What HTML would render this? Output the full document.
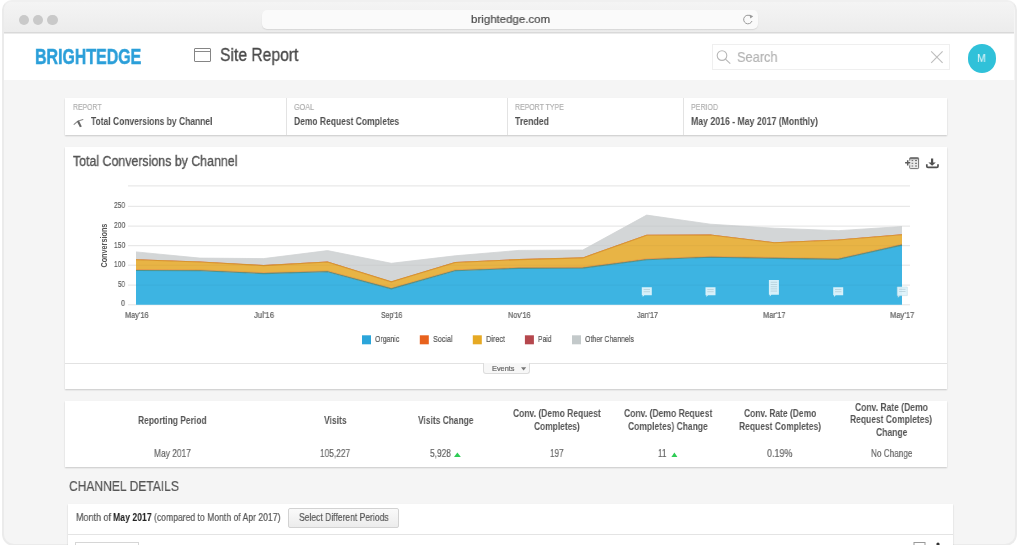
<!DOCTYPE html>
<html>
<head>
<meta charset="utf-8">
<title>BrightEdge - Site Report</title>
<style>
html,body{margin:0;padding:0;}
body{width:1024px;height:545px;overflow:hidden;position:relative;background:#fff;font-family:"Liberation Sans",sans-serif;}
.a{position:absolute;box-sizing:border-box;}
.t{position:absolute;white-space:nowrap;transform-origin:0 0;will-change:transform;font-family:"Liberation Sans",sans-serif;}
.win{left:2px;top:0;width:1014.5px;height:546px;border:2px solid #ebebeb;border-top-color:#f0f0f0;border-radius:10px 10px 12px 12px;background:#f5f5f5;overflow:hidden;}
.titlebar{left:0;top:0;width:1010px;height:30.5px;background:linear-gradient(#f4f4f4,#ececec);border-bottom:1px solid #d9d9d9;}
.titleshadow{left:0;top:30.5px;width:1010px;height:2px;background:linear-gradient(#e6e6e6,#fbfbfb);}
.dot{width:10.6px;height:10.6px;border-radius:50%;background:#c9c9c9;top:12.7px;}
.url{left:258px;top:7.5px;width:496px;height:19px;border-radius:5px;background:#fafafa;box-shadow:0 1px 1px #d8d8d8;}
.header{left:0;top:32px;width:1010px;height:46px;background:#fff;}
.card{background:#fff;box-shadow:0 1px 1.5px rgba(0,0,0,0.18);}
.chart{position:absolute;left:0;top:0;}
</style>
</head>
<body>
<div class="a win">
  <div class="a titlebar"></div>
  <div class="a titleshadow"></div>
  <div class="a dot" style="left:14.5px"></div>
  <div class="a dot" style="left:28.9px"></div>
  <div class="a dot" style="left:43.3px"></div>
  <div class="a url"></div>
  <div class="a header"></div>
</div>

<!-- reload icon -->
<svg class="chart" width="1024" height="545" style="pointer-events:none">
  <path d="M751.3,16.8 A4.3,4.3 0 1 0 752,21" fill="none" stroke="#9a9a9a" stroke-width="1"/>
  <path d="M749.5,14.4 L753.2,16.2 L750.3,18.6 z" fill="#9a9a9a"/>
</svg>

<!-- header: site report icon, search, avatar -->
<div class="a" style="left:193.8px;top:48.2px;width:17px;height:14.2px;border:1.2px solid #858585;border-radius:1px;"></div>
<div class="a" style="left:195px;top:51.2px;width:14.6px;height:1px;background:#8a8a8a;"></div>
<div class="a" style="left:711.5px;top:44.3px;width:238.5px;height:26px;border:1px solid #efefef;background:#fff;"></div>
<svg class="chart" width="1024" height="545">
  <circle cx="722" cy="55.6" r="4.8" fill="none" stroke="#b8b8b8" stroke-width="1.1"/>
  <line x1="725.4" y1="59.1" x2="730.3" y2="63.6" stroke="#b8b8b8" stroke-width="1.2"/>
  <line x1="931.2" y1="51.3" x2="942.6" y2="62.8" stroke="#bdbdbd" stroke-width="1.1"/>
  <line x1="942.6" y1="51.3" x2="931.2" y2="62.8" stroke="#bdbdbd" stroke-width="1.1"/>
</svg>
<div class="a" style="left:967.6px;top:43.9px;width:28.8px;height:28.8px;border-radius:50%;background:#30c1d9;"></div>
<span class="t" style="left:976.6px;top:52.8px;font-size:11.5px;line-height:11.5px;color:#e6f7fa;transform:scaleX(0.92)">M</span>

<!-- report card -->
<div class="a card" style="left:65px;top:98.3px;width:882px;height:36.3px;"></div>
<div class="a" style="left:286px;top:98.3px;width:1px;height:36.3px;background:#e3e3e3;"></div>
<div class="a" style="left:507px;top:98.3px;width:1px;height:36.3px;background:#e3e3e3;"></div>
<div class="a" style="left:683px;top:98.3px;width:1px;height:36.3px;background:#e3e3e3;"></div>
<svg class="chart" width="1024" height="545">
  <path d="M74.1,124.3 L77.7,121.3 L82.9,119.6" fill="none" stroke="#8a8a8a" stroke-width="1.1" stroke-linecap="round"/>
  <path d="M76.9,121.6 L78.9,120.6 L81.8,126.6 L79.9,127.2 z" fill="#666"/>
</svg>

<!-- chart card -->
<div class="a card" style="left:65px;top:146.5px;width:882px;height:242.5px;"></div>
<div class="a" style="left:65px;top:362.7px;width:882px;height:1px;background:#e2e2e2;"></div>
<div class="a" style="left:483.3px;top:363px;width:46.7px;height:11.3px;border:1px solid #dcdcdc;border-top:none;border-radius:0 0 3px 3px;background:#f7f7f7;"></div>
<svg class="chart" width="1024" height="545">
  <path d="M521,367.2 L526.2,367.2 L523.6,370.4 z" fill="#777"/>
  <!-- add-table icon -->
  <rect x="909.7" y="157.7" width="8.9" height="10.9" rx="0.8" fill="#e9e9e9" stroke="#707070" stroke-width="1"/>
  <rect x="909.7" y="157.7" width="8.9" height="1.6" fill="#707070"/>
  <path d="M911.6,160.6 h1.6 M915,160.6 h2 M911.6,163.3 h1.6 M915,163.3 h2 M911.6,166 h1.6 M915,166 h2" stroke="#6a6a6a" stroke-width="1"/>
  <path d="M904.6,162.8 h6.2 M907.7,159.7 v6.2" stroke="#fff" stroke-width="3.2"/>
  <path d="M905.1,162.8 h5.2 M907.7,160.2 v5.2" stroke="#5c5c5c" stroke-width="1.5"/>
  <!-- download icon -->
  <path d="M931,158.4 h2.2 v4.2 h2.6 l-3.7,3.2 l-3.7,-3.2 h2.6 z" fill="#505050"/>
  <path d="M926.8,164.3 v1.9 q0,1.2 1.2,1.2 h8.8 q1.2,0 1.2,-1.2 v-1.9" fill="none" stroke="#505050" stroke-width="1.7"/>
  <!-- legend squares -->
  <rect x="362" y="335.3" width="9" height="9" fill="#2ba5da"/>
  <rect x="419.8" y="335.3" width="9" height="9" fill="#e8621d"/>
  <rect x="472.8" y="335.3" width="9" height="9" fill="#e6a923"/>
  <rect x="524.9" y="335.3" width="9" height="9" fill="#b5474d"/>
  <rect x="572" y="335.3" width="9" height="9" fill="#c3c9ca"/>
</svg>
<svg class="chart" width="1024" height="545" viewBox="0 0 1024 545">
<defs><clipPath id="areaclip"><polygon points="136.00,251.90 199.83,258.10 263.67,258.60 327.50,250.60 391.33,263.30 455.17,255.80 519.00,250.40 582.83,250.00 646.67,215.10 710.50,224.20 774.33,228.20 838.17,230.70 902.00,226.50 902.00,304.70 838.17,304.70 774.33,304.70 710.50,304.70 646.67,304.70 582.83,304.70 519.00,304.70 455.17,304.70 391.33,304.70 327.50,304.70 263.67,304.70 199.83,304.70 136.00,304.70"/></clipPath></defs>
<line x1="128" y1="185.9" x2="910" y2="185.9" stroke="#e3e3e3" stroke-width="1"/><line x1="128" y1="206.3" x2="910" y2="206.3" stroke="#e3e3e3" stroke-width="1"/><line x1="128" y1="226.1" x2="910" y2="226.1" stroke="#e3e3e3" stroke-width="1"/><line x1="128" y1="245.7" x2="910" y2="245.7" stroke="#e3e3e3" stroke-width="1"/><line x1="128" y1="265.2" x2="910" y2="265.2" stroke="#e3e3e3" stroke-width="1"/><line x1="128" y1="285.1" x2="910" y2="285.1" stroke="#e3e3e3" stroke-width="1"/><line x1="128" y1="304.8" x2="910" y2="304.8" stroke="#e3e3e3" stroke-width="1"/>
<polygon points="136.00,251.90 199.83,258.10 263.67,258.60 327.50,250.60 391.33,263.30 455.17,255.80 519.00,250.40 582.83,250.00 646.67,215.10 710.50,224.20 774.33,228.20 838.17,230.70 902.00,226.50 902.00,234.25 838.17,239.50 774.33,242.30 710.50,234.50 646.67,234.70 582.83,257.40 519.00,259.10 455.17,262.00 391.33,281.40 327.50,261.50 263.67,265.10 199.83,261.50 136.00,259.20" fill="#d3d6d7"/>
<polygon points="136.00,259.20 199.83,261.50 263.67,265.10 327.50,261.50 391.33,281.40 455.17,262.00 519.00,259.10 582.83,257.40 646.67,234.70 710.50,234.50 774.33,242.30 838.17,239.50 902.00,234.25 902.00,234.75 838.17,240.00 774.33,242.80 710.50,235.00 646.67,235.20 582.83,257.90 519.00,259.60 455.17,262.50 391.33,281.90 327.50,262.00 263.67,265.60 199.83,262.00 136.00,259.70" fill="#c0504d"/>
<polygon points="136.00,259.70 199.83,262.00 263.67,265.60 327.50,262.00 391.33,281.90 455.17,262.50 519.00,259.60 582.83,257.90 646.67,235.20 710.50,235.00 774.33,242.80 838.17,240.00 902.00,234.75 902.00,244.25 838.17,258.50 774.33,257.50 710.50,256.40 646.67,258.80 582.83,267.20 519.00,267.50 455.17,269.90 391.33,288.00 327.50,270.90 263.67,272.75 199.83,269.90 136.00,269.60" fill="#e8b445"/>
<polygon points="136.00,269.60 199.83,269.90 263.67,272.75 327.50,270.90 391.33,288.00 455.17,269.90 519.00,267.50 582.83,267.20 646.67,258.80 710.50,256.40 774.33,257.50 838.17,258.50 902.00,244.25 902.00,245.25 838.17,259.50 774.33,258.50 710.50,257.40 646.67,259.80 582.83,268.20 519.00,268.50 455.17,270.90 391.33,289.00 327.50,271.90 263.67,273.75 199.83,270.90 136.00,270.60" fill="#e0782c"/>
<polygon points="136.00,270.60 199.83,270.90 263.67,273.75 327.50,271.90 391.33,289.00 455.17,270.90 519.00,268.50 582.83,268.20 646.67,259.80 710.50,257.40 774.33,258.50 838.17,259.50 902.00,245.25 902.00,304.70 838.17,304.70 774.33,304.70 710.50,304.70 646.67,304.70 582.83,304.70 519.00,304.70 455.17,304.70 391.33,304.70 327.50,304.70 263.67,304.70 199.83,304.70 136.00,304.70" fill="#3db4e2"/>
<polyline points="136.00,251.90 199.83,258.10 263.67,258.60 327.50,250.60 391.33,263.30 455.17,255.80 519.00,250.40 582.83,250.00 646.67,215.10 710.50,224.20 774.33,228.20 838.17,230.70 902.00,226.50" fill="none" stroke="#d0d3d4" stroke-width="0.8"/>
<polyline points="136.00,259.70 199.83,262.00 263.67,265.60 327.50,262.00 391.33,281.90 455.17,262.50 519.00,259.60 582.83,257.90 646.67,235.20 710.50,235.00 774.33,242.80 838.17,240.00 902.00,234.75" fill="none" stroke="#d8952e" stroke-width="1.1"/>
<polyline points="136.00,269.60 199.83,269.90 263.67,272.75 327.50,270.90 391.33,288.00 455.17,269.90 519.00,267.50 582.83,267.20 646.67,258.80 710.50,256.40 774.33,257.50 838.17,258.50 902.00,244.25" fill="none" stroke="#df8a30" stroke-width="1.0" stroke-opacity="0.55"/>
<polyline points="136.00,270.50 199.83,270.80 263.67,273.65 327.50,271.80 391.33,288.90 455.17,270.80 519.00,268.40 582.83,268.10 646.67,259.70 710.50,257.30 774.33,258.40 838.17,259.40 902.00,245.15" fill="none" stroke="#4f948c" stroke-width="1.1"/>
<g clip-path="url(#areaclip)"><line x1="136" y1="226.1" x2="902" y2="226.1" stroke="#000" stroke-opacity="0.035" stroke-width="1"/><line x1="136" y1="245.7" x2="902" y2="245.7" stroke="#000" stroke-opacity="0.035" stroke-width="1"/><line x1="136" y1="265.2" x2="902" y2="265.2" stroke="#000" stroke-opacity="0.035" stroke-width="1"/><line x1="136" y1="285.1" x2="902" y2="285.1" stroke="#000" stroke-opacity="0.035" stroke-width="1"/></g>
<path d="M641.8,287.2h10v8.0h-7.5l-1.6,1.7v-1.7h-0.9z" fill="#dff3fb" fill-opacity="0.95"/><line x1="643.6" y1="289.5" x2="650.0" y2="289.5" stroke="#aac4cf" stroke-width="0.6"/><line x1="643.6" y1="291.7" x2="650.0" y2="291.7" stroke="#aac4cf" stroke-width="0.6"/><path d="M705.5,287.2h10v8h-7.5l-1.6,1.7v-1.7h-0.9z" fill="#dff3fb" fill-opacity="0.95"/><line x1="707.3" y1="289.5" x2="713.7" y2="289.5" stroke="#aac4cf" stroke-width="0.6"/><line x1="707.3" y1="291.7" x2="713.7" y2="291.7" stroke="#aac4cf" stroke-width="0.6"/><path d="M768.9,280.0h10v14.8h-7.5l-1.6,1.7v-1.7h-0.9z" fill="#dff3fb" fill-opacity="0.95"/><line x1="770.7" y1="282.3" x2="777.1" y2="282.3" stroke="#aac4cf" stroke-width="0.6"/><line x1="770.7" y1="284.5" x2="777.1" y2="284.5" stroke="#aac4cf" stroke-width="0.6"/><line x1="770.7" y1="286.7" x2="777.1" y2="286.7" stroke="#aac4cf" stroke-width="0.6"/><line x1="770.7" y1="288.9" x2="777.1" y2="288.9" stroke="#aac4cf" stroke-width="0.6"/><line x1="770.7" y1="291.1" x2="777.1" y2="291.1" stroke="#aac4cf" stroke-width="0.6"/><path d="M833.2,287.2h10v8h-7.5l-1.6,1.7v-1.7h-0.9z" fill="#dff3fb" fill-opacity="0.95"/><line x1="835.0" y1="289.5" x2="841.4" y2="289.5" stroke="#aac4cf" stroke-width="0.6"/><line x1="835.0" y1="291.7" x2="841.4" y2="291.7" stroke="#aac4cf" stroke-width="0.6"/><path d="M897.3,287.0h10v8.6h-7.5l-1.6,1.7v-1.7h-0.9z" fill="#dff3fb" fill-opacity="0.95" stroke="#c5dde6" stroke-width="0.6"/><line x1="899.1" y1="289.3" x2="905.5" y2="289.3" stroke="#aac4cf" stroke-width="0.6"/><line x1="899.1" y1="291.5" x2="905.5" y2="291.5" stroke="#aac4cf" stroke-width="0.6"/>
<text x="0" y="0" transform="translate(106.6,245.6) rotate(-90)" text-anchor="middle" font-family="Liberation Sans" font-weight="bold" font-size="8.2" fill="#555" textLength="44" lengthAdjust="spacingAndGlyphs">Conversions</text>
</svg>

<!-- summary table -->
<div class="a card" style="left:65px;top:400.6px;width:882px;height:66.4px;"></div>

<!-- channel details -->
<div class="a card" style="left:68px;top:504.2px;width:885.4px;height:60px;"></div>
<div class="a" style="left:68px;top:534px;width:885.4px;height:1px;background:#e4e4e4;"></div>
<div class="a" style="left:288.1px;top:508.1px;width:110.9px;height:19.7px;border:1px solid #d2d2d2;border-radius:2px;background:linear-gradient(#fafafa,#ececec);"></div>
<div class="a" style="left:75.4px;top:541.7px;width:64.1px;height:12px;border:1px solid #d6d6d6;background:#fff;"></div>
<svg class="chart" width="1024" height="545">
  <path d="M451.8,457 L455.2,452.6 L458.6,457 z" transform="translate(2.2,0)" fill="#2ecc55"/>
  <path d="M671.4,457 L674.4,452.6 L677.4,457 z" fill="#2ecc55"/>
  <rect x="914" y="542.5" width="11" height="4" fill="none" stroke="#999" stroke-width="1"/>
  <circle cx="938" cy="544" r="1.6" fill="#333"/>
</svg>

<span class="t" style="left:470.70px;top:13.03px;font-size:11.63px;line-height:11.63px;color:#4a4a4a;font-weight:normal;transform:scaleX(0.9869);-webkit-text-stroke:0.2px #4a4a4a;">brightedge.com</span>
<span class="t" style="left:34.50px;top:45.76px;font-size:21.22px;line-height:21.22px;color:#2b9fd9;font-weight:bold;transform:scaleX(0.7513);-webkit-text-stroke:0.5px #2b9fd9;">BRIGHTEDGE</span>
<span class="t" style="left:219.60px;top:46.42px;font-size:18.75px;line-height:18.75px;color:#4a4a4a;font-weight:normal;transform:scaleX(0.8359);-webkit-text-stroke:0.35px #4a4a4a;">Site Report</span>
<span class="t" style="left:737.00px;top:48.58px;font-size:15.55px;line-height:15.55px;color:#b4b4b4;font-weight:normal;transform:scaleX(0.8240);-webkit-text-stroke:0.2px #b4b4b4;">Search</span>
<span class="t" style="left:72.75px;top:103.09px;font-size:9.30px;line-height:9.30px;color:#b0b0b0;font-weight:normal;transform:scaleX(0.7384);-webkit-text-stroke:0.2px #b0b0b0;">REPORT</span>
<span class="t" style="left:90.50px;top:116.80px;font-size:10.32px;line-height:10.32px;color:#505050;font-weight:bold;transform:scaleX(0.8223);">Total Conversions by Channel</span>
<span class="t" style="left:294.00px;top:103.09px;font-size:9.30px;line-height:9.30px;color:#b0b0b0;font-weight:normal;transform:scaleX(0.7737);-webkit-text-stroke:0.2px #b0b0b0;">GOAL</span>
<span class="t" style="left:294.00px;top:116.78px;font-size:10.32px;line-height:10.32px;color:#505050;font-weight:bold;transform:scaleX(0.8230);">Demo Request Completes</span>
<span class="t" style="left:514.50px;top:103.09px;font-size:9.30px;line-height:9.30px;color:#b0b0b0;font-weight:normal;transform:scaleX(0.7483);-webkit-text-stroke:0.2px #b0b0b0;">REPORT TYPE</span>
<span class="t" style="left:514.50px;top:116.83px;font-size:10.32px;line-height:10.32px;color:#505050;font-weight:bold;transform:scaleX(0.8470);">Trended</span>
<span class="t" style="left:691.00px;top:103.09px;font-size:9.30px;line-height:9.30px;color:#b0b0b0;font-weight:normal;transform:scaleX(0.7570);-webkit-text-stroke:0.2px #b0b0b0;">PERIOD</span>
<span class="t" style="left:691.00px;top:116.71px;font-size:10.32px;line-height:10.32px;color:#505050;font-weight:bold;transform:scaleX(0.8452);">May 2016 - May 2017 (Monthly)</span>
<span class="t" style="left:73.00px;top:154.30px;font-size:14.68px;line-height:14.68px;color:#555;font-weight:normal;transform:scaleX(0.8435);-webkit-text-stroke:0.35px #555;">Total Conversions by Channel</span>
<span class="t" style="left:114.00px;top:200.59px;font-size:8.72px;line-height:8.72px;color:#606060;font-weight:normal;transform:scaleX(0.7562);-webkit-text-stroke:0.2px #606060;">250</span>
<span class="t" style="left:113.75px;top:220.59px;font-size:8.72px;line-height:8.72px;color:#606060;font-weight:normal;transform:scaleX(0.7734);-webkit-text-stroke:0.2px #606060;">200</span>
<span class="t" style="left:113.75px;top:241.09px;font-size:8.72px;line-height:8.72px;color:#606060;font-weight:normal;transform:scaleX(0.7734);-webkit-text-stroke:0.2px #606060;">150</span>
<span class="t" style="left:113.75px;top:260.09px;font-size:8.72px;line-height:8.72px;color:#606060;font-weight:normal;transform:scaleX(0.7734);-webkit-text-stroke:0.2px #606060;">100</span>
<span class="t" style="left:118.00px;top:279.59px;font-size:8.72px;line-height:8.72px;color:#606060;font-weight:normal;transform:scaleX(0.7218);-webkit-text-stroke:0.2px #606060;">50</span>
<span class="t" style="left:121.00px;top:299.09px;font-size:8.72px;line-height:8.72px;color:#606060;font-weight:normal;transform:scaleX(0.8249);-webkit-text-stroke:0.2px #606060;">0</span>
<span class="t" style="left:124.50px;top:310.52px;font-size:8.72px;line-height:8.72px;color:#606060;font-weight:normal;transform:scaleX(0.8442);-webkit-text-stroke:0.2px #606060;">May'16</span>
<span class="t" style="left:253.75px;top:310.59px;font-size:8.72px;line-height:8.72px;color:#606060;font-weight:normal;transform:scaleX(0.8882);-webkit-text-stroke:0.2px #606060;">Jul'16</span>
<span class="t" style="left:380.98px;top:310.53px;font-size:8.72px;line-height:8.72px;color:#606060;font-weight:normal;transform:scaleX(0.7904);-webkit-text-stroke:0.2px #606060;">Sep'16</span>
<span class="t" style="left:508.00px;top:310.59px;font-size:8.72px;line-height:8.72px;color:#606060;font-weight:normal;transform:scaleX(0.8371);-webkit-text-stroke:0.2px #606060;">Nov'16</span>
<span class="t" style="left:636.50px;top:310.59px;font-size:8.72px;line-height:8.72px;color:#606060;font-weight:normal;transform:scaleX(0.8258);-webkit-text-stroke:0.2px #606060;">Jan'17</span>
<span class="t" style="left:763.25px;top:310.59px;font-size:8.72px;line-height:8.72px;color:#606060;font-weight:normal;transform:scaleX(0.8529);-webkit-text-stroke:0.2px #606060;">Mar'17</span>
<span class="t" style="left:889.88px;top:310.51px;font-size:8.72px;line-height:8.72px;color:#606060;font-weight:normal;transform:scaleX(0.8711);-webkit-text-stroke:0.2px #606060;">May'17</span>
<span class="t" style="left:374.90px;top:334.31px;font-size:9.59px;line-height:9.59px;color:#555;font-weight:normal;transform:scaleX(0.7235);-webkit-text-stroke:0.2px #555;">Organic</span>
<span class="t" style="left:432.50px;top:334.39px;font-size:9.59px;line-height:9.59px;color:#555;font-weight:normal;transform:scaleX(0.7462);-webkit-text-stroke:0.2px #555;">Social</span>
<span class="t" style="left:485.50px;top:334.41px;font-size:9.59px;line-height:9.59px;color:#555;font-weight:normal;transform:scaleX(0.7626);-webkit-text-stroke:0.2px #555;">Direct</span>
<span class="t" style="left:537.80px;top:334.32px;font-size:9.59px;line-height:9.59px;color:#555;font-weight:normal;transform:scaleX(0.7033);-webkit-text-stroke:0.2px #555;">Paid</span>
<span class="t" style="left:584.50px;top:334.43px;font-size:9.59px;line-height:9.59px;color:#555;font-weight:normal;transform:scaleX(0.7293);-webkit-text-stroke:0.2px #555;">Other Channels</span>
<span class="t" style="left:491.50px;top:364.62px;font-size:7.27px;line-height:7.27px;color:#666;font-weight:normal;transform:scaleX(1.0128);-webkit-text-stroke:0.2px #666;">Events</span>
<span class="t" style="left:137.90px;top:415.61px;font-size:10.47px;line-height:10.47px;color:#555;font-weight:bold;transform:scaleX(0.8070);">Reporting Period</span>
<span class="t" style="left:323.80px;top:415.70px;font-size:10.47px;line-height:10.47px;color:#555;font-weight:bold;transform:scaleX(0.8149);">Visits</span>
<span class="t" style="left:418.30px;top:415.64px;font-size:10.47px;line-height:10.47px;color:#555;font-weight:bold;transform:scaleX(0.8027);">Visits Change</span>
<span class="t" style="left:513.30px;top:409.25px;font-size:10.47px;line-height:10.47px;color:#555;font-weight:bold;transform:scaleX(0.8124);">Conv. (Demo Request</span>
<span class="t" style="left:534.30px;top:421.60px;font-size:10.47px;line-height:10.47px;color:#555;font-weight:bold;transform:scaleX(0.8020);">Completes)</span>
<span class="t" style="left:624.00px;top:409.25px;font-size:10.47px;line-height:10.47px;color:#555;font-weight:bold;transform:scaleX(0.8179);">Conv. (Demo Request</span>
<span class="t" style="left:628.30px;top:421.60px;font-size:10.47px;line-height:10.47px;color:#555;font-weight:bold;transform:scaleX(0.8111);">Completes) Change</span>
<span class="t" style="left:743.50px;top:409.27px;font-size:10.47px;line-height:10.47px;color:#555;font-weight:bold;transform:scaleX(0.8092);">Conv. Rate (Demo</span>
<span class="t" style="left:738.80px;top:421.62px;font-size:10.47px;line-height:10.47px;color:#555;font-weight:bold;transform:scaleX(0.8104);">Request Completes)</span>
<span class="t" style="left:855.10px;top:403.47px;font-size:10.47px;line-height:10.47px;color:#555;font-weight:bold;transform:scaleX(0.8148);">Conv. Rate (Demo</span>
<span class="t" style="left:850.30px;top:415.22px;font-size:10.47px;line-height:10.47px;color:#555;font-weight:bold;transform:scaleX(0.8104);">Request Completes)</span>
<span class="t" style="left:876.00px;top:427.79px;font-size:10.47px;line-height:10.47px;color:#555;font-weight:bold;transform:scaleX(0.8182);">Change</span>
<span class="t" style="left:153.70px;top:447.61px;font-size:10.76px;line-height:10.76px;color:#666;font-weight:normal;transform:scaleX(0.7811);-webkit-text-stroke:0.2px #666;">May 2017</span>
<span class="t" style="left:319.60px;top:447.63px;font-size:10.76px;line-height:10.76px;color:#666;font-weight:normal;transform:scaleX(0.7716);-webkit-text-stroke:0.2px #666;">105,227</span>
<span class="t" style="left:430.00px;top:447.62px;font-size:10.76px;line-height:10.76px;color:#666;font-weight:normal;transform:scaleX(0.7766);-webkit-text-stroke:0.2px #666;">5,928</span>
<span class="t" style="left:550.40px;top:447.66px;font-size:10.76px;line-height:10.76px;color:#666;font-weight:normal;transform:scaleX(0.7581);-webkit-text-stroke:0.2px #666;">197</span>
<span class="t" style="left:658.00px;top:447.66px;font-size:10.76px;line-height:10.76px;color:#666;font-weight:normal;transform:scaleX(0.7524);-webkit-text-stroke:0.2px #666;">11</span>
<span class="t" style="left:766.70px;top:447.66px;font-size:10.76px;line-height:10.76px;color:#666;font-weight:normal;transform:scaleX(0.8297);-webkit-text-stroke:0.2px #666;">0.19%</span>
<span class="t" style="left:870.60px;top:447.60px;font-size:10.76px;line-height:10.76px;color:#666;font-weight:normal;transform:scaleX(0.7608);-webkit-text-stroke:0.2px #666;">No Change</span>
<span class="t" style="left:68.50px;top:479.47px;font-size:14.97px;line-height:14.97px;color:#555;font-weight:normal;transform:scaleX(0.8055);-webkit-text-stroke:0.2px #555;">CHANNEL DETAILS</span>
<span class="t" style="left:75.80px;top:511.73px;font-size:10.90px;line-height:10.90px;color:#555;font-weight:normal;transform:scaleX(0.8271);-webkit-text-stroke:0.2px #555;">Month of</span>
<span class="t" style="left:113.30px;top:511.67px;font-size:10.90px;line-height:10.90px;color:#222;font-weight:bold;transform:scaleX(0.7981);">May 2017</span>
<span class="t" style="left:153.80px;top:511.73px;font-size:10.90px;line-height:10.90px;color:#555;font-weight:normal;transform:scaleX(0.7908);-webkit-text-stroke:0.2px #555;">(compared to Month of Apr 2017)</span>
<span class="t" style="left:298.75px;top:512.13px;font-size:10.90px;line-height:10.90px;color:#555;font-weight:normal;transform:scaleX(0.7842);-webkit-text-stroke:0.2px #555;">Select Different Periods</span>
</body>
</html>
